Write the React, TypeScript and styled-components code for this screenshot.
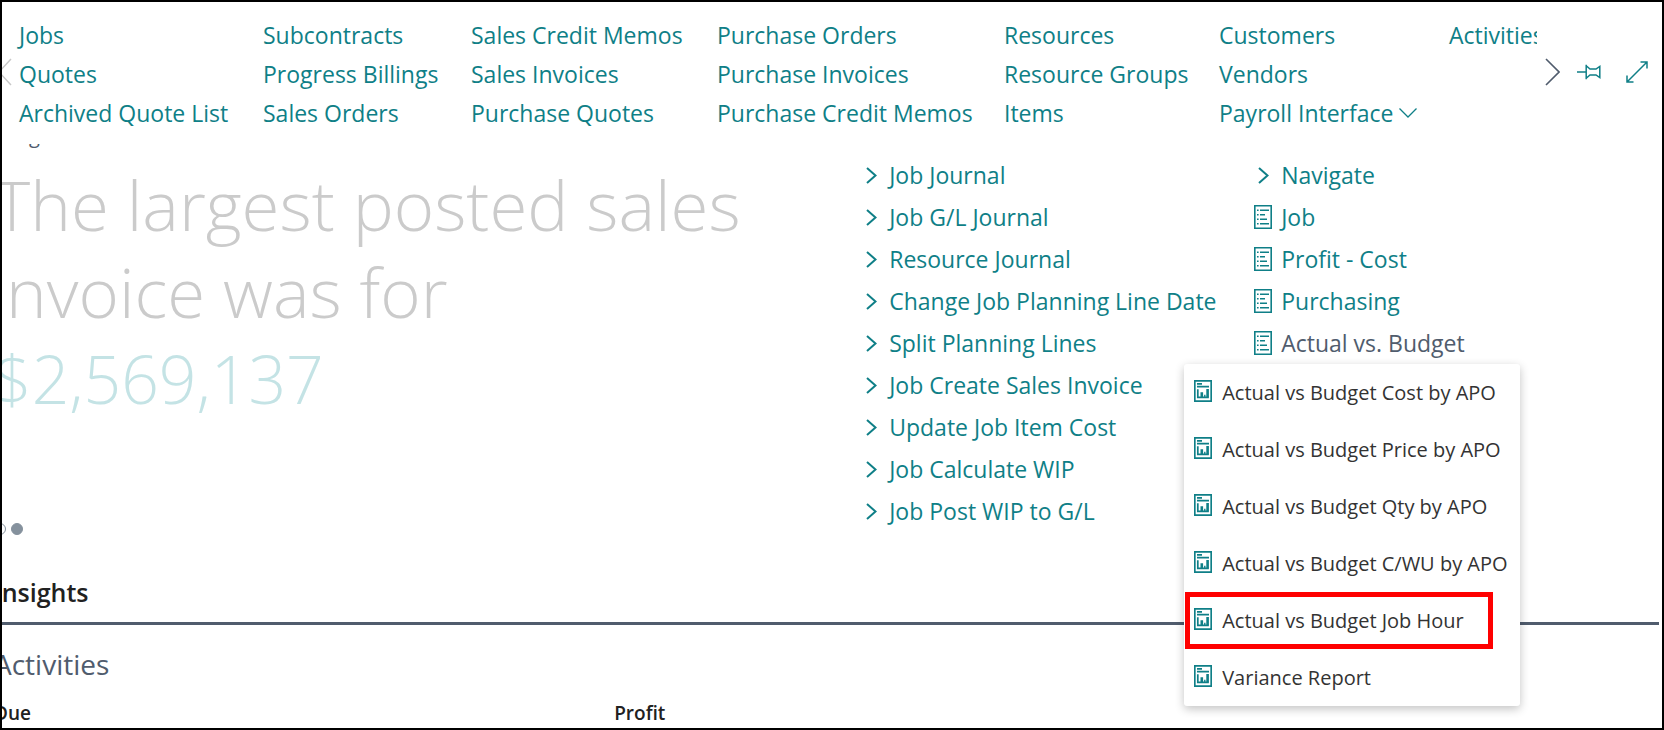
import React from 'react';
import styled, { createGlobalStyle, css } from 'styled-components';

const teal = '#0f7f87';
const slate = '#505c6d';

const GlobalStyle = createGlobalStyle`
  *, *::before, *::after { box-sizing: border-box; }
  body {
    margin: 0;
    background: #fff;
    color: #212121;
    font-family: "Segoe UI", "Open Sans", "Noto Sans", sans-serif;
  }
  ul { list-style: none; margin: 0; padding: 0; }
  h1, h2, p { margin: 0; font-weight: 400; }
  a { color: inherit; text-decoration: none; }
  button { background: none; border: 0; padding: 0; font: inherit; color: inherit; cursor: pointer; }
  svg { display: block; flex: none; fill: none; stroke: currentColor; }
`;

const Page = styled.div`
  height: 100vh;
  display: flex;
  flex-direction: column;
  overflow: hidden;
  border: 2px solid #000;
`;

const Header = styled.header`
  display: flex;
  flex: none;
  height: 142px;
  padding-top: 13px;
  color: ${teal};
`;

const ScrollButton = styled.button<{ $faded?: boolean }>`
  flex: none;
  align-self: flex-start;
  display: flex;
  margin-top: 43px;
  color: ${(p) => (p.$faded ? '#c8c8c8' : slate)};
`;

const Nav = styled.nav`
  flex: 1;
  min-width: 0;
  overflow: hidden;
  display: grid;
  grid-template-columns: 244px 208px 246px 287px 215px 230px 120px;
  padding-left: 7px;
`;

const NavLink = styled.a`
  display: flex;
  align-items: center;
  gap: 6px;
  height: 39px;
  font-size: 23px;
  white-space: nowrap;
`;

const Tools = styled.div`
  display: flex;
  flex: none;
  width: 125px;
  padding-left: 8px;
`;

const ToolButton = styled.button`
  display: flex;
  align-items: center;
  justify-content: center;
  align-self: flex-start;
  height: 30px;
  width: 30px;
  margin-top: 42px;
  margin-left: 14px;
  & + & { margin-left: 18px; }
`;

const Main = styled.main`
  flex: 1;
  display: grid;
  grid-template-columns: calc(52% - 3px) 392px 1fr;
  grid-template-rows: 429px auto;
`;

const Headline = styled.section`
  margin-left: -8px;
  display: flex;
  flex-direction: column;
`;

const HeadlineCaption = styled.p`
  height: 6px;
  overflow: hidden;
  display: flex;
  align-items: flex-end;
  padding-left: 35px;
  font-size: 20px;
  line-height: 28px;
  color: ${slate};
`;

const HeadlineText = styled.h1`
  margin-top: 11px;
  font-size: 69px;
  font-weight: 300;
  line-height: 87px;
  color: #cbcbcb;
`;

const HeadlineLine = styled.span<{ $indented?: boolean }>`
  display: block;
  padding-left: ${(p) => (p.$indented ? '12px' : '0')};
`;

const Amount = styled.a`
  display: block;
  font-size: 66px;
  color: #c4e3e5;
`;

const Dots = styled.div`
  display: flex;
  gap: 5px;
  margin-top: 101px;
`;

const Dot = styled.button<{ $active?: boolean }>`
  width: 12px;
  height: 12px;
  border: 1px solid #85919d;
  border-radius: 50%;
  ${(p) => p.$active && css`background: #85919d;`}
`;

const ActionList = styled.ul`
  padding-top: 10px;
  font-size: 23px;
  color: ${teal};
`;

const ActionItem = styled.li`
  position: relative;
`;

const ActionLink = styled.a<{ $open?: boolean }>`
  display: flex;
  align-items: center;
  height: 42px;
  white-space: nowrap;
  color: ${(p) => (p.$open ? slate : teal)};
`;

const IconSlot = styled.span`
  display: flex;
  justify-content: center;
  width: 18px;
  margin-right: 9px;
  color: ${teal};
`;

const Menu = styled.ul`
  position: absolute;
  top: 100%;
  left: -70px;
  width: 336px;
  background: #fff;
  border-radius: 3px;
  box-shadow: 0 3px 10px rgba(0, 0, 0, 0.24);
  color: #333;
`;

const MenuLink = styled.a<{ $marked?: boolean }>`
  display: flex;
  align-items: center;
  height: 57px;
  padding-left: 10px;
  font-size: 20px;
  white-space: nowrap;
  ${IconSlot} { padding-bottom: 4px; margin-right: 10px; }
  ${(p) => p.$marked && css`
    width: 308px;
    margin-left: 1px;
    padding-left: 4px;
    border: 5px solid #f00;
  `}
`;

const Insights = styled.section`
  grid-column: 1 / -1;
  margin-left: -8px;
`;

const InsightsTitle = styled.h2`
  height: 52px;
  margin-right: 3px;
  font-size: 25px;
  font-weight: 600;
  line-height: 38px;
  color: #212121;
  border-bottom: 3px solid ${slate};
`;

const GroupTitle = styled.h2`
  margin-top: 19px;
  font-size: 28px;
  line-height: 40px;
  color: ${slate};
`;

const Cues = styled.div`
  display: grid;
  grid-template-columns: 37% 1fr;
  column-gap: 3px;
  margin-top: 14px;
  font-size: 19px;
  font-weight: 600;
  line-height: 30px;
`;

const ChevronIcon = () => (
  <svg width="11" height="17" viewBox="0 0 11 17" strokeWidth="2" aria-hidden="true">
    <path d="M1 1 9.5 8.5 1 16" />
  </svg>
);

const ListIcon = () => (
  <svg width="18" height="24" viewBox="0 0 18 24" strokeWidth="1.6" aria-hidden="true">
    <path d="M.8.8h16.4v22.4H.8z" />
    <path d="M3 5.3h1.6M6 5.3h9M3 9.8h1.6M6 9.8h5M3 14.3h1.6M6 14.3h7M3 18.8h1.6M6 18.8h9" />
  </svg>
);

const ReportIcon = () => (
  <svg width="18" height="22" viewBox="0 0 18 22" strokeWidth="1.7" aria-hidden="true">
    <path d="M.8.8h16.4v20.4H.8z" />
    <path d="M3 3.8h5M3 6.7h12M3.8 9.2v8.2h11" />
    <path d="M7.8 17.5v-5.2M13.6 17.5V9" strokeWidth="2.6" />
    <path d="M10.8 17.5v-2.8" strokeWidth="1.4" />
  </svg>
);

const PinIcon = () => (
  <svg width="24" height="16" viewBox="0 0 24 16" strokeWidth="1.5" aria-hidden="true">
    <path d="M0 8h9M9.2.8v14.4M9.2 1.8 13 5h6l3.8-2.6v11.2L19 11h-6l-3.8 3.2" />
  </svg>
);

const ExpandIcon = () => (
  <svg width="22" height="22" viewBox="0 0 22 22" strokeWidth="1.5" aria-hidden="true">
    <path d="M1 21 21 1M14.5 1H21v6.5M1 14.5V21h6.5" />
  </svg>
);

const navColumns = [
  ['Jobs', 'Quotes', 'Archived Quote List'],
  ['Subcontracts', 'Progress Billings', 'Sales Orders'],
  ['Sales Credit Memos', 'Sales Invoices', 'Purchase Quotes'],
  ['Purchase Orders', 'Purchase Invoices', 'Purchase Credit Memos'],
  ['Resources', 'Resource Groups', 'Items'],
  ['Customers', 'Vendors', 'Payroll Interface'],
  ['Activities'],
];

const tasks = [
  'Job Journal',
  'Job G/L Journal',
  'Resource Journal',
  'Change Job Planning Line Date',
  'Split Planning Lines',
  'Job Create Sales Invoice',
  'Update Job Item Cost',
  'Job Calculate WIP',
  'Job Post WIP to G/L',
];

const reportGroups = ['Job', 'Profit - Cost', 'Purchasing', 'Actual vs. Budget'];

const reports = [
  'Actual vs Budget Cost by APO',
  'Actual vs Budget Price by APO',
  'Actual vs Budget Qty by APO',
  'Actual vs Budget C/WU by APO',
  'Actual vs Budget Job Hour',
  'Variance Report',
];

const markedReport = 'Actual vs Budget Job Hour';
const openGroup = 'Actual vs. Budget';

export default function App() {
  return (
    <>
      <GlobalStyle />
      <Page>
        <Header>
          <ScrollButton $faded aria-label="Scroll left">
            <svg width="10" height="28" viewBox="0 0 10 28" strokeWidth="1.5" aria-hidden="true">
              <path d="M9 1-3 14 9 27" />
            </svg>
          </ScrollButton>
          <Nav>
            {navColumns.map((column) => (
              <ul key={column[0]}>
                {column.map((label) => (
                  <li key={label}>
                    <NavLink href="#">
                      {label}
                      {label === 'Payroll Interface' && (
                        <svg width="18" height="10" viewBox="0 0 18 10" strokeWidth="1.3" stroke={slate} aria-hidden="true">
                          <path d="M.5.5 9 9 17.5.5" />
                        </svg>
                      )}
                    </NavLink>
                  </li>
                ))}
              </ul>
            ))}
          </Nav>
          <Tools>
            <ScrollButton aria-label="Scroll right">
              <svg width="15" height="28" viewBox="0 0 15 28" strokeWidth="1.6" aria-hidden="true">
                <path d="M1 1 14 14 1 27" />
              </svg>
            </ScrollButton>
            <ToolButton aria-label="Pin"><PinIcon /></ToolButton>
            <ToolButton aria-label="Expand"><ExpandIcon /></ToolButton>
          </Tools>
        </Header>
        <Main>
          <Headline>
            <HeadlineCaption>g</HeadlineCaption>
            <HeadlineText>
              <HeadlineLine>The largest posted sales</HeadlineLine>
              <HeadlineLine $indented>nvoice was for</HeadlineLine>
              <Amount href="#">$2,569,137</Amount>
            </HeadlineText>
            <Dots>
              <Dot aria-label="Previous headline" />
              <Dot $active aria-label="Current headline" />
            </Dots>
          </Headline>
          <ActionList>
            {tasks.map((label) => (
              <ActionItem key={label}>
                <ActionLink href="#">
                  <IconSlot><ChevronIcon /></IconSlot>
                  {label}
                </ActionLink>
              </ActionItem>
            ))}
          </ActionList>
          <ActionList>
            <ActionItem>
              <ActionLink href="#">
                <IconSlot><ChevronIcon /></IconSlot>
                Navigate
              </ActionLink>
            </ActionItem>
            {reportGroups.map((label) => (
              <ActionItem key={label}>
                <ActionLink href="#" $open={label === openGroup}>
                  <IconSlot><ListIcon /></IconSlot>
                  {label}
                </ActionLink>
                {label === openGroup && (
                  <Menu>
                    {reports.map((report) => (
                      <li key={report}>
                        <MenuLink href="#" $marked={report === markedReport}>
                          <IconSlot><ReportIcon /></IconSlot>
                          {report}
                        </MenuLink>
                      </li>
                    ))}
                  </Menu>
                )}
              </ActionItem>
            ))}
          </ActionList>
          <Insights>
            <InsightsTitle>Insights</InsightsTitle>
            <GroupTitle>Activities</GroupTitle>
            <Cues>
              <span>Due</span>
              <span>Profit</span>
            </Cues>
          </Insights>
        </Main>
      </Page>
    </>
  );
}
